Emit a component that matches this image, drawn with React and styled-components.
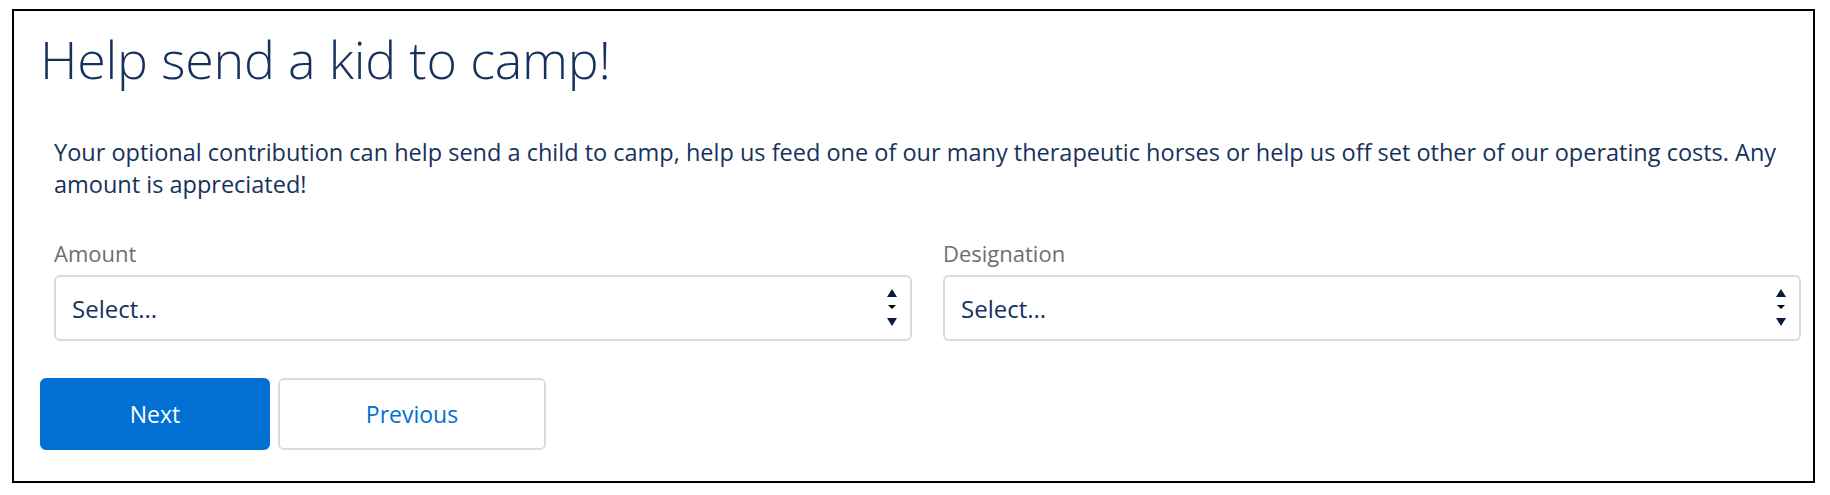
import React from "react";
import styled, { createGlobalStyle } from "styled-components";

const GlobalStyle = createGlobalStyle`
  html, body {
    margin: 0;
    padding: 0;
    background: #ffffff;
  }
  body {
    font-family: "Open Sans", "Noto Sans", sans-serif;
    color: #16325c;
  }
`;

const Page = styled.div`
  padding: 9px 0 0 12px;
`;

const Card = styled.section`
  box-sizing: border-box;
  width: 1803px;
  height: 474px;
  border: 2px solid #000;
  padding: 16px 12px 0 26px;
  display: flex;
  flex-direction: column;
`;

const Title = styled.h1`
  margin: 0;
  font-size: 52px;
  font-weight: 300;
  line-height: 64px;
  color: #16325c;
  letter-spacing: -0.2px;
`;

const Intro = styled.p`
  margin: 45px 0 0 14px;
  font-size: 23.5px;
  line-height: 32px;
  color: #16325c;
`;

const Fields = styled.div`
  display: grid;
  grid-template-columns: 1fr 1fr;
  column-gap: 31px;
  margin: 39px 0 0 14px;
`;

const Field = styled.label`
  display: flex;
  flex-direction: column;
  gap: 8px;
`;

const Label = styled.span`
  font-size: 22px;
  line-height: 28px;
  color: #706e6b;
`;

const SelectBox = styled.div`
  box-sizing: border-box;
  height: 66px;
  border: 2px solid #dddbda;
  border-radius: 6px;
  display: flex;
  align-items: center;
  justify-content: space-between;
  padding: 0 12px 0 16px;
  font-size: 24px;
  color: #16325c;
`;

const Arrows = styled.svg`
  width: 12px;
  height: 38px;
  flex: none;
`;

const Actions = styled.div`
  display: flex;
  gap: 8px;
  margin-top: 37px;
`;

const Button = styled.button`
  box-sizing: border-box;
  height: 72px;
  width: ${(p) => (p.$primary ? "230px" : "268px")};
  border-radius: 6px;
  border: 2px solid ${(p) => (p.$primary ? "#0070d2" : "#dddbda")};
  background: ${(p) => (p.$primary ? "#0070d2" : "#ffffff")};
  color: ${(p) => (p.$primary ? "#ffffff" : "#0070d2")};
  font-family: "Open Sans", "Noto Sans", sans-serif;
  font-size: 23px;
  cursor: pointer;
`;

function SelectArrows() {
  return (
    <Arrows viewBox="0 0 12 38">
      <polygon points="6,0 11,8 1,8" fill="#061c3f" />
      <polygon points="2,16 10,16 6,20" fill="#000" />
      <polygon points="1,29 11,29 6,37" fill="#061c3f" />
    </Arrows>
  );
}

function SelectField({ label }) {
  return (
    <Field>
      <Label>{label}</Label>
      <SelectBox>
        <span>Select...</span>
        <SelectArrows />
      </SelectBox>
    </Field>
  );
}

function App() {
  return (
    <Page>
      <GlobalStyle />
      <Card>
        <Title>Help send a kid to camp!</Title>
        <Intro>
          Your optional contribution can help send a child to camp, help us feed one of our many
          therapeutic horses or help us off set other of our operating costs. Any amount is
          appreciated!
        </Intro>
        <Fields>
          <SelectField label="Amount" />
          <SelectField label="Designation" />
        </Fields>
        <Actions>
          <Button $primary>Next</Button>
          <Button>Previous</Button>
        </Actions>
      </Card>
    </Page>
  );
}

export default App;
